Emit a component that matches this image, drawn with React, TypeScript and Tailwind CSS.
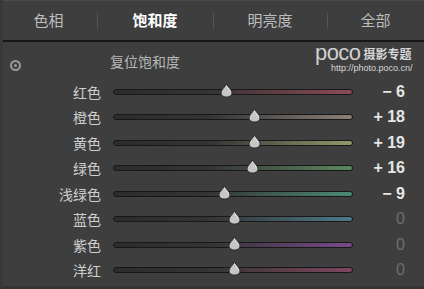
import React from "react"

type Row = { name: string; value: string; pos: number; tint: string; active: boolean }

const rows: Row[] = [
  { name: "红色", value: "− 6", pos: 113, tint: "#8c4a57", active: true },
  { name: "橙色", value: "+ 18", pos: 141, tint: "#8a8078", active: true },
  { name: "黄色", value: "+ 19", pos: 141, tint: "#8e9a6a", active: true },
  { name: "绿色", value: "+ 16", pos: 139, tint: "#5c8a5e", active: true },
  { name: "浅绿色", value: "− 9", pos: 111, tint: "#4c8a78", active: true },
  { name: "蓝色", value: "0", pos: 121, tint: "#4c7a88", active: false },
  { name: "紫色", value: "0", pos: 121, tint: "#784a8a", active: false },
  { name: "洋红", value: "0", pos: 121, tint: "#7e465e", active: false },
]

const tabs = [
  { label: "色相", w: "w-[97px]", on: false },
  { label: "饱和度", w: "w-[116px]", on: true },
  { label: "明亮度", w: "w-[114px]", on: false },
  { label: "全部", w: "w-[97px]", on: false },
]

const Thumb = () => (
  <svg width="15" height="15" viewBox="0 0 15 15" className="absolute -top-[6px] -ml-[7px]">
    <path d="M7.5 1 C9 4.2 13 6.8 13 9.8 C13 12.6 10.6 14 7.5 14 C4.4 14 2 12.6 2 9.8 C2 6.8 6 4.2 7.5 1 Z" fill="#c6c6c6" stroke="#262626" strokeWidth="0.9" />
    <path d="M7.5 3.2 C8.6 5.2 11.3 7.3 11.6 9.6" fill="none" stroke="#e9e9e9" strokeWidth="0.8" />
  </svg>
)

const App = () => {
  return (
    <div className="w-[424px] h-[289px] bg-[#3e3e3e] overflow-hidden flex flex-col border-l-[3px] border-l-[#383838] border-b-[3px] border-b-[#353535] text-[#d2d2d2]" style={{ fontFamily: '"Noto Sans CJK SC", "Noto Sans", sans-serif' }}>
      {/* tabs */}
      <div className="h-[40px] flex items-center -ml-[3px] border-t border-t-[#4a4a4a]">
        {tabs.map((t, i) => (
          <div key={t.label} className={`${t.w} h-[22px] flex items-center justify-center relative`}>
            {i > 0 && <div className="absolute left-0 top-[3px] h-[16px] w-px bg-[#555]" />}
            <span className={t.on ? "text-[15px] font-bold text-white" : "text-[15px] text-[#bdbdbd]"}>{t.label}</span>
          </div>
        ))}
      </div>
      <div className="h-[2px] bg-[#161616] -ml-[3px]" />

      {/* reset row */}
      <div className="h-[36px] flex items-start relative">
        <div className="mt-[18px] ml-[7px] w-[11px] h-[11px] rounded-full border-[2px] border-[#9a9a9a] flex items-center justify-center">
          <div className="w-[3px] h-[3px] rounded-full bg-[#9a9a9a]" />
        </div>
        <span className="ml-[89px] mt-[9px] text-[14px] text-[#b8b8b8]">复位饱和度</span>
        <div className="absolute left-[312px] top-[1px] flex flex-col">
          <div className="flex items-end gap-[3px] h-[19px]">
            <span className="text-[22px] leading-[19px] text-[#cfcfcf] tracking-tight" style={{ fontFamily: '"Liberation Sans", sans-serif' }}>poco</span>
            <span className="text-[12px] leading-[14px] font-bold text-[#d8d8d8] mb-[1px]">摄影专题</span>
          </div>
          <span className="text-[9px] leading-[10px] text-[#d8d8d8] ml-[16px] mt-[1px]" style={{ fontFamily: '"Liberation Sans", sans-serif' }}>http://photo.poco.cn/</span>
        </div>
      </div>

      {/* sliders */}
      <div className="flex flex-col pt-[1px]">
        {rows.map((r) => (
          <div key={r.name} className="h-[25.5px] flex items-center">
            <div className="w-[98px] text-right text-[14px] text-[#cfcfcf] leading-none">{r.name}</div>
            <div className="ml-[12px] w-[240px] relative">
              <div
                className="h-[6px] rounded-full border border-[#181818]"
                style={{ background: `linear-gradient(to right, #2c2c2c 0%, #343434 40%, ${r.tint} 100%)` }}
              />
              <div className="absolute top-0" style={{ left: r.pos }}>
                <Thumb />
              </div>
            </div>
            <div
              className={`w-[52px] text-right text-[16px] leading-none ${r.active ? "text-[#e6e6e6] font-bold" : "text-[#6e6e6e] font-normal"}`}
              style={{ fontFamily: '"Liberation Sans", sans-serif' }}
            >
              {r.value}
            </div>
          </div>
        ))}
      </div>
    </div>
  )
}

export default App
